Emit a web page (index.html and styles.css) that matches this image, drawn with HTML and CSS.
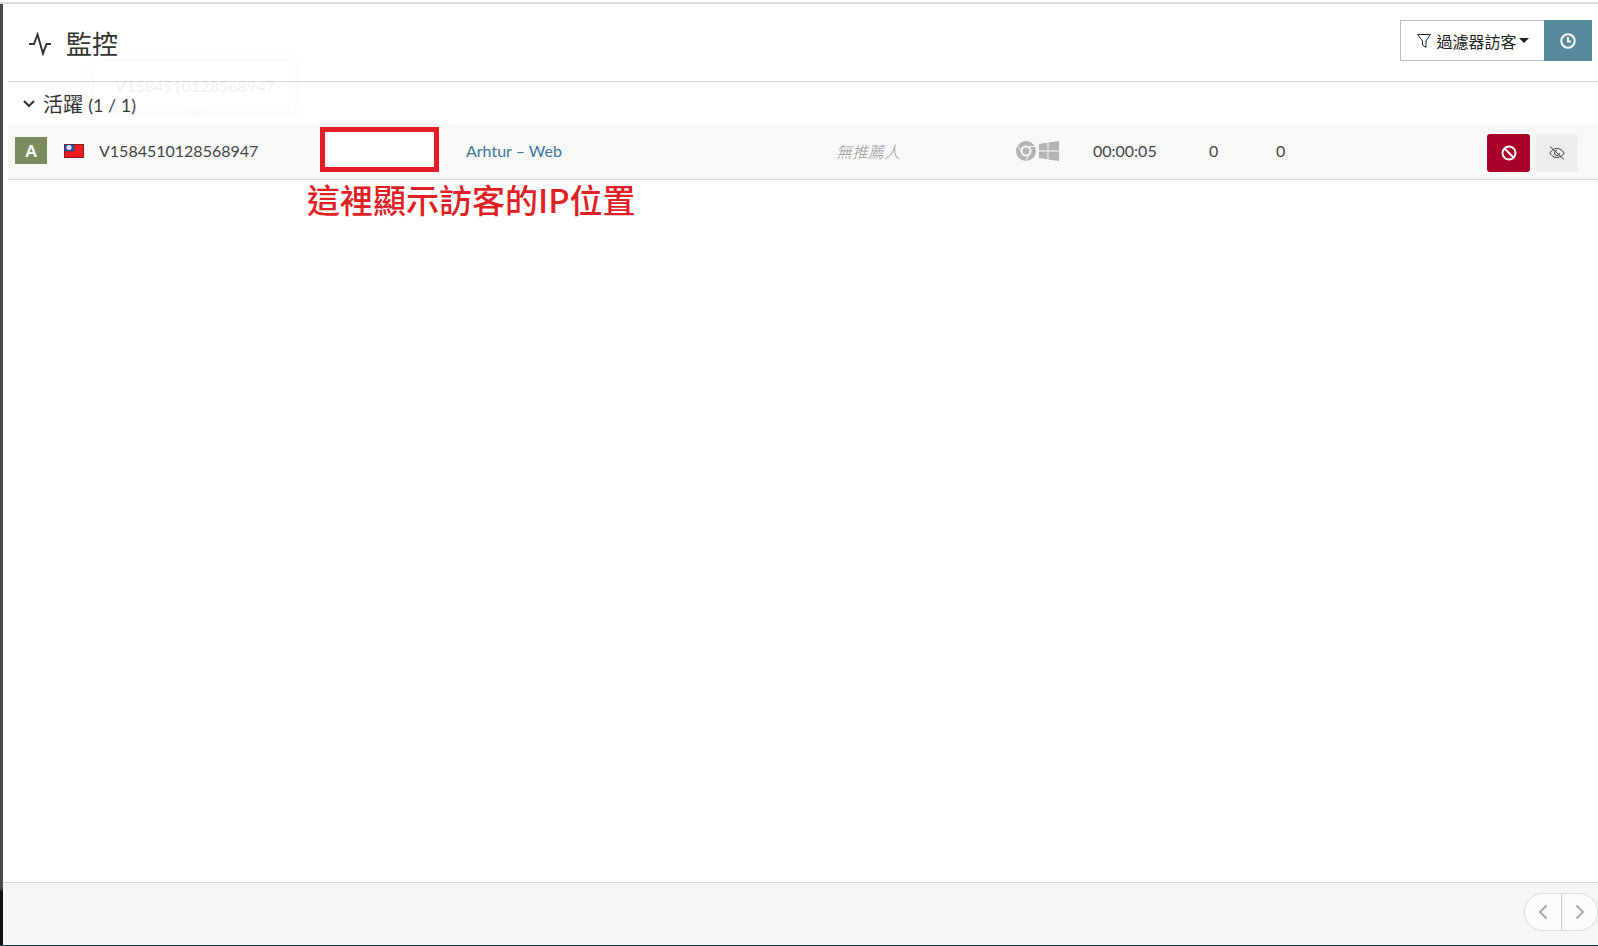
FILE: index.html
```html
<!DOCTYPE html>
<html lang="zh-Hant">
<head>
  <meta charset="UTF-8">
  <meta name="viewport" content="width=device-width, initial-scale=1.0">
  <title>監控</title>
  <link rel="stylesheet" href="styles.css">
</head>
<body>
  <div class="page">
    <header class="header">
      <h1>
        <svg class="pulse" viewBox="0 0 24 24"><path d="M1 12h5L9.500 2.500l5.500 19 3.500-9.500H23"/></svg>
        監控
      </h1>
      <div class="tools">
        <button type="button" class="filter">
          <svg viewBox="0 0 16 16"><path d="M1.500 1.500h13L10 8v6.500L6.500 12V8z"/></svg>
          <span>過濾器訪客</span>
          <i class="caret"></i>
        </button>
        <button type="button" class="history" aria-label="歷史">
          <svg viewBox="0 0 16 16"><circle cx="8" cy="8" r="6.700"/><path d="M8 4v4.500h3"/></svg>
        </button>
      </div>
    </header>

    <main>
      <h2>
        <svg viewBox="0 0 12 12"><path d="M1 3l5 5 5-5"/></svg>
        <span>活躍 <span class="count">(1 / 1)</span></span>
      </h2>

      <table class="visitors">
        <colgroup>
          <col class="col-status"><col class="col-flag"><col class="col-name"><col class="col-ip"><col>
          <col class="col-referrer"><col class="col-system"><col class="col-time">
          <col class="col-count"><col class="col-count"><col class="col-actions">
        </colgroup>
        <tbody>
          <tr>
            <td class="status"><span class="badge">A</span></td>
            <td>
              <svg class="flag" viewBox="0 0 20 14">
                <rect width="20" height="14" fill="#ee1c20"/>
                <rect width="10" height="7" fill="#2c50c0"/>
                <circle cx="5" cy="3.500" r="2.500" fill="#dde6ff" stroke="none"/>
                <rect x=".5" y=".5" width="19" height="13" fill="none" stroke="#700" stroke-opacity=".4"/>
              </svg>
            </td>
            <td class="name">
              V1584510128568947
              <div class="tooltip">V1584510128568947</div>
            </td>
            <td class="ip">
              <div class="ip-box"></div>
              <div class="note">這裡顯示訪客的IP位置</div>
            </td>
            <td><a href="#">Arhtur – Web</a></td>
            <td class="referrer">無推薦人</td>
            <td>
              <div class="system">
                <svg viewBox="0 0 20 20">
                  <circle cx="10" cy="10" r="10" fill="#b3b3b3"/>
                  <circle cx="10" cy="10" r="4.500" fill="#b3b3b3" stroke="#f8f8f8" stroke-width="2"/>
                  <path d="M10 5.500h8.500M6.100 12.200L1.800 5M13.900 12.200L9.800 19.500" stroke="#f8f8f8" stroke-width="1"/>
                </svg>
                <svg viewBox="0 0 20 20"><path fill="#b3b3b3" d="M0 3l8.500-1.300v7.800H0zM9.500 1.500L20 0v9.500H9.500zM0 10.500h8.500v7.800L0 17zM9.500 10.500H20V20L9.500 18.500z"/></svg>
              </div>
            </td>
            <td>00:00:05</td>
            <td>0</td>
            <td>0</td>
            <td>
              <div class="actions">
                <button type="button" class="ban" aria-label="封鎖">
                  <svg viewBox="0 0 16 16"><circle cx="8" cy="8" r="6.500"/><path d="M3.500 3.500l9 9"/></svg>
                </button>
                <button type="button" class="hide" aria-label="隱藏">
                  <svg viewBox="0 0 16 16"><path d="M.8 8C4.500 2 11.500 2 15.200 8 11.500 14 4.500 14 .8 8zM1 1.500l14 13"/><path d="M8 5.500a2.500 2.500 0 1 0 2.500 2.500"/></svg>
                </button>
              </div>
            </td>
          </tr>
        </tbody>
      </table>
    </main>

    <footer class="footer">
      <div class="pager">
        <button type="button" aria-label="上一頁"><svg viewBox="0 0 16 16"><path d="M11.500 1.500L5 8l6.500 6.500"/></svg></button>
        <button type="button" aria-label="下一頁"><svg viewBox="0 0 16 16"><path d="M4.500 1.500L11 8l-6.500 6.500"/></svg></button>
      </div>
    </footer>
  </div>
</body>
</html>
```
FILE: styles.css
```css
* {
  box-sizing: border-box;
}

body {
  margin: 0;
  padding-top: 2px;
  background: white;
  color: #444;
  font-family: Lato, "Noto Sans CJK TC", sans-serif;
  font-size: 16px;
}

.page {
  display: flex;
  flex-direction: column;
  min-height: calc(100vh - 2px);
  padding-left: 5px;
  border-style: solid;
  border-width: 2px 0 1px 3px;
  border-image: linear-gradient(#ddd 2px, #4a4a4a 2px, #4a4a4a calc(100% - 58px), #111 calc(100% - 54px), #111 calc(100% - 1px), #143848 calc(100% - 1px)) 2 0 1 3;
}

svg {
  display: block;
  fill: none;
  stroke: currentColor;
  flex: none;
}

button {
  display: flex;
  align-items: center;
  justify-content: center;
  padding: 0;
  border: none;
  font: inherit;
  color: inherit;
  cursor: pointer;
}

.header {
  display: flex;
  justify-content: space-between;
  height: 78px;
  padding: 16px 6px 0 20px;
  border-bottom: 1px solid #d8d8d8;
}

h1 {
  display: flex;
  align-items: center;
  gap: 14px;
  margin: 0;
  height: 48px;
  color: #333;
  font-size: 26px;
  font-weight: 400;
  line-height: 40px;
}

.pulse {
  width: 24px;
  height: 24px;
  stroke-width: 2;
}

.tools {
  display: flex;
}

.filter {
  width: 144px;
  height: 41px;
  gap: 4px;
  background: white;
  border: 1px solid #bbb;
  border-right: none;
  color: #222;
}

.filter svg {
  width: 16px;
  height: 16px;
}

.caret {
  margin-left: -2px;
  border: 5px solid transparent;
  border-top-color: #222;
  border-bottom: none;
}

.history {
  width: 48px;
  height: 41px;
  background: #57899c;
  color: white;
}

.history svg,
.ban svg,
.hide svg {
  width: 16px;
  height: 16px;
  stroke-width: 2;
}

main {
  flex: 1;
}

h2 {
  display: flex;
  align-items: center;
  gap: 8px;
  height: 41px;
  margin: 0;
  padding: 2px 0 0 15px;
  font-size: 20px;
  font-weight: 400;
  color: #333;
}

h2 svg {
  width: 12px;
  height: 12px;
  stroke-width: 2;
}

.count {
  font-size: 18px;
}

.visitors {
  width: 100%;
  table-layout: fixed;
  border-collapse: collapse;
  background: #f8f8f8;
}

.col-status { width: 48px; }
.col-flag { width: 35px; }
.col-name { width: 229px; }
.col-ip { width: 138px; }
.col-referrer { width: 180px; }
.col-system { width: 77px; }
.col-time { width: 116px; }
.col-count { width: 67px; }
.col-actions { width: 263px; }

.visitors td {
  height: 56px;
  padding: 0 0 0 8px;
  border-bottom: 1px solid #d8d8d8;
}

.visitors .status {
  padding-left: 7px;
}

.badge {
  display: block;
  width: 32px;
  height: 27px;
  background: #7d8c5c;
  color: white;
  font-weight: 900;
  line-height: 28px;
  text-align: center;
}

.flag {
  width: 20px;
  height: 14px;
}

.name,
.ip {
  position: relative;
}

/* fading out */
.tooltip {
  position: absolute;
  top: -62px;
  left: 4px;
  width: 200px;
  padding: 14px 0;
  border-radius: 4px;
  background: white;
  box-shadow: 0 0 6px rgba(0, 0, 0, 0.5);
  line-height: 22px;
  text-align: center;
  opacity: 0.08;
}

.tooltip::after {
  content: "";
  position: absolute;
  top: 100%;
  left: 50%;
  margin-left: -8px;
  border: 8px solid transparent;
  border-top-color: #aaa;
  border-bottom: none;
}

.visitors .ip {
  padding-left: 0;
}

.ip-box {
  width: 119px;
  height: 45px;
  margin-bottom: 2px;
  background: white;
  border: 5px solid #e81c24;
}

.note {
  position: absolute;
  top: 54px;
  left: -13px;
  color: #e02024;
  font-family: "Noto Sans CJK TC", sans-serif;
  font-size: 33px;
  font-weight: 500;
  line-height: 44px;
  white-space: nowrap;
}

a {
  color: #3d7599;
  text-decoration: none;
}

.referrer {
  color: #999;
  font-style: italic;
  font-weight: 300;
}

.system {
  display: flex;
  gap: 3px;
}

.system svg {
  width: 20px;
  height: 20px;
  stroke: none;
}

.actions {
  display: flex;
  justify-content: flex-end;
  gap: 5px;
  padding: 4px 20px 0 0;
}

.actions button {
  width: 43px;
  height: 38px;
  border-radius: 3px;
}

.actions .ban {
  background: #a80028;
  color: white;
}

.actions .hide {
  background: #eee;
}

.hide svg {
  stroke-width: 1;
}

.footer {
  display: flex;
  align-items: center;
  justify-content: flex-end;
  height: 63px;
  margin-left: -5px;
  background: #f6f6f8;
  border-top: 1px solid #d8d8dc;
}

.pager {
  display: flex;
  margin-top: -4px;
  background: #fcfcfc;
  border: 1px solid #ddd;
  border-radius: 19px;
}

.pager button {
  width: 36px;
  height: 36px;
  background: none;
  color: #aaa;
}

.pager button + button {
  border-left: 1px solid #ccc;
}

.pager svg {
  width: 16px;
  height: 16px;
  stroke-width: 2;
}
```
